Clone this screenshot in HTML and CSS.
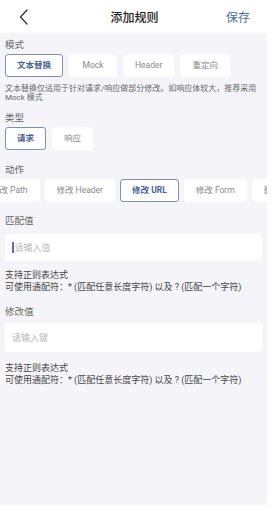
FILE: index.html
```html
<!DOCTYPE html>
<html lang="zh-CN">
<head>
    <meta charset="UTF-8">
    <title>添加规则</title>
    <link rel="stylesheet" href="styles.css">
</head>
<body>

<div class="screen">
    <div class="navbar">
        <span class="back">
            <svg width="10" height="16" viewBox="0 0 10 16"><path d="M8 1 L1.5 8 L8 15" fill="none" stroke="#333" stroke-width="1.3" stroke-linecap="round" stroke-linejoin="round"/></svg>
        </span>
        <span class="title">添加规则</span>
        <span class="save">保存</span>
    </div>

    <div class="content">
        <div class="label first">模式</div>
        <div class="options">
            <span class="opt mode active">文本替换</span>
            <span class="opt mode">Mock</span>
            <span class="opt mode">Header</span>
            <span class="opt mode">重定向</span>
        </div>
        <p class="desc">文本替换仅适用于针对请求/响应做部分修改。如响应体较大，推荐采用 Mock 模式</p>

        <div class="label">类型</div>
        <div class="options">
            <span class="opt active">请求</span>
            <span class="opt">响应</span>
        </div>

        <div class="label action-label">动作</div>
        <div class="scroller">
            <div class="options track">
                <span class="opt">修改 Path</span>
                <span class="opt">修改 Header</span>
                <span class="opt active">修改 URL</span>
                <span class="opt">修改 Form</span>
                <span class="opt">删除 Header</span>
            </div>
        </div>

        <div class="label field-label">匹配值</div>
        <div class="input"><span class="caret"></span><span class="placeholder">请输入值</span></div>
        <p class="help">支持正则表达式<br>可使用通配符：* (匹配任意长度字符) 以及 ? (匹配一个字符)</p>

        <div class="label field-label">修改值</div>
        <div class="input second"><span class="placeholder">请输入键</span></div>
        <p class="help last">支持正则表达式<br>可使用通配符：* (匹配任意长度字符) 以及 ? (匹配一个字符)</p>
    </div>
</div>

</body>
</html>
```

FILE: styles.css
```css
* {
    padding: 0;
    margin: 0;
    box-sizing: border-box;
}
body {
    background: #fff;
    font-family: Roboto, "Noto Sans CJK SC", sans-serif;
}
.screen {
    width: 267px;
    height: 505px;
    background: #f5f5f9;
}
.navbar {
    height: 33px;
    background: #fff;
    display: flex;
    align-items: center;
    justify-content: space-between;
    padding: 0 17px 0 19px;
}
.navbar .back {
    width: 40px;
    display: flex;
    align-items: center;
}
.navbar .title {
    font-size: 12px;
    font-weight: 500;
    color: #222;
}
.navbar .save {
    width: 40px;
    text-align: right;
    font-size: 12px;
    color: #4f6aa8;
}
.content {
    padding: 0 5px;
}
.label {
    font-size: 9.5px;
    line-height: 12px;
    color: #666;
    margin-top: 10px;
}
.label.first {
    margin-top: 6px;
}
.label.action-label {
    margin-top: 14px;
}
.label.field-label {
    margin-top: 13px;
}
.options {
    display: flex;
    gap: 6px;
    margin-top: 3px;
}
.opt {
    flex: none;
    height: 23px;
    line-height: 21px;
    padding: 0 11px;
    font-size: 8.5px;
    color: #8a8a8a;
    background: #fff;
    border: 1px solid #fff;
    border-radius: 3px;
    text-align: center;
}
.opt.mode {
    min-width: 48px;
}
.opt.active {
    border-color: #8390ad;
    color: #4a5f9c;
    font-weight: 700;
}
.desc {
    margin-top: 7px;
    font-size: 8px;
    line-height: 9px;
    color: #666;
}
.scroller {
    overflow: hidden;
    margin: 0 -5px;
}
.track {
    gap: 5px;
    margin-left: -21px;
}
.input {
    margin-top: 7px;
    height: 27px;
    background: #fff;
    border-radius: 3px;
    display: flex;
    align-items: center;
    padding: 0 7px;
}
.input.second {
    margin-top: 5px;
    height: 29px;
}
.caret {
    width: 1.5px;
    height: 11px;
    background: #4f6ad0;
    margin-right: 1px;
}
.placeholder {
    font-size: 9px;
    color: #b8b8b8;
}
.help {
    margin-top: 8px;
    font-size: 9px;
    line-height: 12px;
    color: #444;
}
.help.last {
    margin-top: 10px;
}
```
